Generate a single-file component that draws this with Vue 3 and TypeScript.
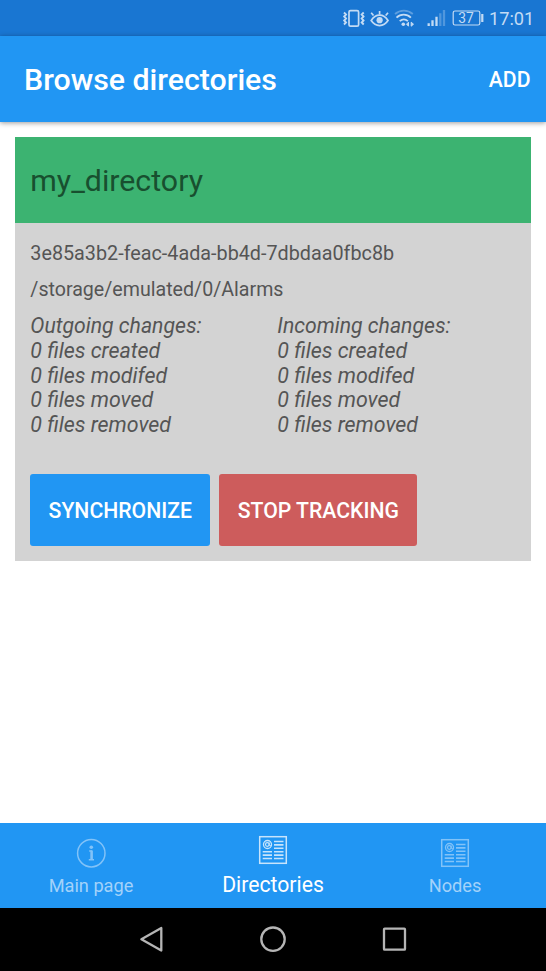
<script setup lang="ts">
interface ChangeSet {
  title: string
  lines: string[]
}

interface Tab {
  label: string
  icon: 'info' | 'news'
  active: boolean
}

const lines: string[] = ['0 files created', '0 files modifed', '0 files moved', '0 files removed']

const changes: ChangeSet[] = [
  { title: 'Outgoing changes:', lines },
  { title: 'Incoming changes:', lines },
]

const tabs: Tab[] = [
  { label: 'Main page', icon: 'info', active: false },
  { label: 'Directories', icon: 'news', active: true },
  { label: 'Nodes', icon: 'news', active: false },
]
</script>

<template>
  <div class="screen">
    <div class="status">
      <svg class="status-icons" width="152" height="36" viewBox="0 0 152 36" fill="none" stroke="#c3dbf4">
        <!-- vibrate -->
        <rect x="14" y="10.600" width="9.600" height="15.600" rx="1.500" stroke-width="1.700" />
        <path d="M9 12.500l2 2-1.800 2 1.800 2-1.800 2 1.800 2-2 2M28.700 12.500l-2 2 1.800 2-1.800 2 1.800 2-1.800 2 2 2" stroke-width="1.900" />
        <!-- eye comfort -->
        <path d="M36.200 20.500c4.400-7.200 12.400-7.200 16.800 0-4.400 6.700-12.400 6.700-16.800 0z" stroke-width="1.700" />
        <circle cx="44.600" cy="20.200" r="3.100" fill="#c3dbf4" stroke="none" />
        <path d="M44.600 14.500v-3.500M38.500 15.500l-2.300-2.800M50.700 15.500l2.300-2.800" stroke-width="1.700" />
        <!-- wifi -->
        <path d="M60 14c5.200-4.400 12.600-4.400 17.800 0" stroke-width="1.800" opacity=".4" />
        <path d="M61.500 17.600c4-4 10.400-4 14.400 0M64.700 21.200c2.600-2.300 5.700-2.300 8.200 0" stroke-width="1.800" />
        <circle cx="68.300" cy="24.200" r="1.800" fill="#c3dbf4" stroke="none" />
        <path d="M71.500 24.200l2-2v4zM78.500 24.200l-2.300-2v4z" stroke-width="1" fill="#c3dbf4" />
        <!-- signal -->
        <path d="M93.700 26v-2.800M97.500 26v-5.800M101.500 26v-9.200" stroke-width="2.300" />
        <path d="M105.300 26V13.200M109 26V10" stroke-width="2.300" opacity=".33" />
        <!-- battery -->
        <rect x="118.200" y="11" width="26.600" height="14" rx="1.800" stroke-width="1.200" />
        <path d="M147.300 14v8" stroke-width="2.200" />
      </svg>
      <span class="battery">37</span>
      <span class="clock">17:01</span>
    </div>

    <header class="toolbar">
      <h1 class="title">Browse directories</h1>
      <button class="add">ADD</button>
    </header>

    <main class="content">
      <section class="card">
        <div class="name">my_directory</div>
        <div class="body">
          <p class="meta">3e85a3b2-feac-4ada-bb4d-7dbdaa0fbc8b</p>
          <p class="meta path">/storage/emulated/0/Alarms</p>
          <div class="changes">
            <div v-for="set in changes" :key="set.title">
              <div>{{ set.title }}</div>
              <div v-for="line in set.lines" :key="line" class="line">{{ line }}</div>
            </div>
          </div>
          <div class="actions">
            <button class="btn sync">SYNCHRONIZE</button>
            <button class="btn stop">STOP TRACKING</button>
          </div>
        </div>
      </section>
    </main>

    <nav class="tabs">
      <div v-for="tab in tabs" :key="tab.label" class="tab" :class="{ active: tab.active }">
        <svg v-if="tab.icon === 'info'" width="30" height="30" viewBox="0 0 30 30" fill="none" stroke="currentColor">
          <circle cx="15.300" cy="15.200" r="13.700" stroke-width="1.500" />
          <circle cx="15.300" cy="9.300" r="1.800" fill="currentColor" stroke="none" />
          <path d="M13.200 13h2.800M12.800 21.800h5.200" stroke-width="1.500" />
          <path d="M15.600 12.500v9.500" stroke-width="2.600" />
        </svg>
        <svg v-else width="30" height="30" viewBox="0 0 30 30" fill="none" stroke="currentColor">
          <rect x="1.700" y="1.700" width="26.600" height="26.600" stroke-width="1.500" />
          <circle cx="9.500" cy="9.500" r="4" stroke-width="1.300" />
          <circle cx="9.300" cy="9.500" r="1.800" stroke-width="1.200" />
          <path d="M11.300 7.500v3q1 1.300 2-.5" stroke-width="1" />
          <path d="M16 6.500h9.500M16 9.900h9.500M16 13.300h9.500M4.700 16.700h9.300M16 16.700h9.500M4.700 20.100h9.300M16 20.100h9.500M4.700 23.500h9.300M16 23.500h9.500" stroke-width="1.600" />
        </svg>
        <span>{{ tab.label }}</span>
      </div>
    </nav>

    <div class="system">
      <svg width="30" height="30" viewBox="0 0 30 30"><path d="M4.400 15.200L24.300 4v22.500z" /></svg>
      <svg width="30" height="30" viewBox="0 0 30 30"><circle cx="15" cy="15.200" r="11.700" /></svg>
      <svg width="30" height="30" viewBox="0 0 30 30"><rect x="4" y="4.700" width="21" height="21" rx=".7" /></svg>
    </div>
  </div>
</template>

<style>
body {
  margin: 0;
}
</style>

<style scoped>
.screen {
  width: 546px;
  height: 971px;
  display: flex;
  flex-direction: column;
  overflow: hidden;
  background: #fff;
  font-family: Roboto, "Liberation Sans", sans-serif;
  white-space: nowrap;
}
button {
  border: 0;
  padding: 0;
  color: #fff;
  font: 500 21.2px/25px Roboto, "Liberation Sans", sans-serif;
  background: none;
}
.status {
  height: 36px;
  flex: none;
  box-sizing: border-box;
  padding-left: 335px;
  display: flex;
  background: #1976d2;
  color: #c3dbf4;
}
.status-icons {
  flex: none;
}
.battery {
  width: 28px;
  margin-left: -35px;
  flex: none;
  text-align: center;
  font-size: 13.8px;
  line-height: 37px;
}
.clock {
  margin-left: 9px;
  font-size: 18.2px;
  line-height: 38px;
}
.toolbar {
  height: 85.5px;
  flex: none;
  box-sizing: border-box;
  padding: 2px 15.5px 0 24px;
  display: flex;
  align-items: center;
  justify-content: space-between;
  background: #2196f3;
  box-shadow: 0 1px 5px rgba(0, 0, 0, 0.4);
}
.title {
  margin: 0;
  color: #fff;
  font-size: 30.3px;
  font-weight: 500;
  line-height: 36px;
}
.content {
  flex: 1;
  padding: 15px;
}
.card {
  height: 424px;
  display: flex;
  flex-direction: column;
  background: #d3d3d3;
  color: #555;
}
.name {
  height: 86px;
  box-sizing: border-box;
  padding: 2px 15px 0 15.3px;
  background: #3cb371;
  color: #184f2f;
  font-size: 30.3px;
  line-height: 84px;
}
.body {
  padding: 19px 15px 0 15.300px;
}
.meta {
  margin: 0 0 12px;
  font-size: 19.770px;
  line-height: 24.500px;
}
.path {
  margin-bottom: 11px;
  font-size: 19.630px;
}
.changes {
  display: grid;
  grid-template-columns: 247px 1fr;
  padding-top: 0.500px;
  font-size: 21.200px;
  line-height: 24.800px;
  font-style: italic;
}
.line {
  font-size: 21.400px;
}
.actions {
  display: flex;
  gap: 9px;
  margin-top: 36px;
}
.btn {
  height: 72.500px;
  padding-top: 1px;
  border-radius: 3px;
}
.sync {
  width: 180px;
  background: #2196f3;
}
.stop {
  width: 198px;
  background: #cd5c5c;
}
.tabs {
  height: 85px;
  flex: none;
  display: grid;
  grid-template-columns: repeat(3, 1fr);
  background: #2196f3;
}
.tab {
  display: flex;
  flex-direction: column;
  align-items: center;
  box-sizing: border-box;
  padding-top: 15px;
  color: #a3d2fa;
  font-size: 18.200px;
  line-height: 24px;
}
.tab svg {
  margin-bottom: 6px;
  opacity: 0.75;
}
.tab.active {
  padding-top: 12px;
  color: #fff;
  font-size: 21.200px;
}
.tab.active svg {
  margin-bottom: 8.500px;
}
.system {
  height: 63.500px;
  flex: none;
  display: flex;
  align-items: center;
  justify-content: center;
  gap: 91.500px;
  background: #000;
}
.system svg {
  fill: none;
  stroke: #b5b5b5;
  stroke-width: 2.300;
  stroke-linejoin: round;
}
</style>
